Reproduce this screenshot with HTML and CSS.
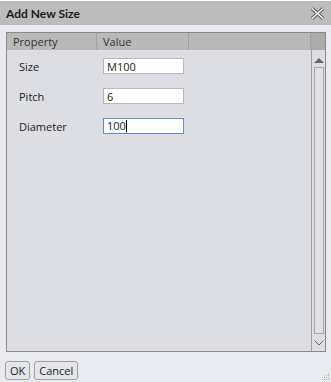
FILE: index.html
```html
<!DOCTYPE html>
<html lang="en">
<head>
  <meta charset="UTF-8">
  <title>Add New Size</title>
  <link rel="stylesheet" href="styles.css">
</head>
<body>
  <div class="dialog">
    <div class="titleBar">
      <span class="title">Add New Size</span>
      <svg class="closeIcon" width="15" height="13" viewBox="0 0 15 13">
        <path d="M2 1.5 L13 11.5 M13 1.5 L2 11.5" stroke="#555" stroke-width="3.4" />
        <path d="M2 1.5 L13 11.5 M13 1.5 L2 11.5" stroke="#fff" stroke-width="1.5" />
      </svg>
    </div>
    <div class="content">
      <div class="grid">
        <div class="gridHeader">
          <div class="col colProp">Property</div>
          <div class="col colValue">Value</div>
          <div class="col colRest"></div>
          <div class="col colScroll"></div>
        </div>
        <div class="gridBody">
          <div class="rows">
            <div class="row">
              <span class="label">Size</span>
              <input type="text" class="field" value="M100">
            </div>
            <div class="row">
              <span class="label">Pitch</span>
              <input type="text" class="field" value="6">
            </div>
            <div class="row">
              <span class="label">Diameter</span>
              <div class="field focused">100<span class="caret"></span></div>
            </div>
          </div>
          <div class="scrollBar">
            <svg class="arrow" width="10" height="6" viewBox="0 0 10 6"><path d="M0 6 L5 1 L10 6 Z" fill="#666"/></svg>
            <div class="thumb"></div>
            <svg class="arrow" width="10" height="6" viewBox="0 0 10 6"><path d="M0.5 0.5 L5 5 L9.5 0.5" fill="none" stroke="#666"/></svg>
          </div>
        </div>
      </div>
    </div>
    <div class="buttons">
      <button class="btn">OK</button>
      <button class="btn">Cancel</button>
    </div>
    <svg class="grip" width="8" height="8" viewBox="0 0 8 8">
      <rect x="6" y="0" width="1" height="1" fill="#aaa"/>
      <rect x="4" y="2" width="1" height="1" fill="#aaa"/>
      <rect x="6" y="2" width="1" height="1" fill="#aaa"/>
      <rect x="2" y="4" width="1" height="1" fill="#aaa"/>
      <rect x="4" y="4" width="1" height="1" fill="#aaa"/>
      <rect x="6" y="4" width="1" height="1" fill="#aaa"/>
      <rect x="0" y="6" width="1" height="1" fill="#aaa"/>
      <rect x="2" y="6" width="1" height="1" fill="#aaa"/>
      <rect x="4" y="6" width="1" height="1" fill="#aaa"/>
      <rect x="6" y="6" width="1" height="1" fill="#aaa"/>
    </svg>
  </div>
</body>
</html>
```
FILE: styles.css
```css
body {
  margin: 0;
  padding: 0;
  font-family: 'Open Sans', 'Noto Sans', sans-serif;
  font-size: 11px;
  color: #222;
  background-color: #fff;
}

.dialog {
  position: relative;
  width: 331px;
  height: 381px;
  margin-top: 1px;
  background-color: #e8eaf0;
  display: flex;
  flex-direction: column;
}

.titleBar {
  height: 24px;
  background-color: #bcbcbc;
  display: flex;
  align-items: center;
  justify-content: space-between;
  padding: 0 6px 0 6px;
}

.title {
  font-family: 'Lato', 'Open Sans', sans-serif;
  font-weight: bold;
  font-size: 12px;
  color: #1a1a1a;
}

.content {
  padding: 7px 5px 0 6px;
}

.grid {
  border: 1px solid #8a8a8a;
  height: 318px;
  display: flex;
  flex-direction: column;
  background-color: #dcdee3;
}

.gridHeader {
  display: flex;
  height: 17px;
  background-color: #b9b9b9;
}

.col {
  border-right: 1px solid #a2a2a2;
  padding-left: 6px;
  line-height: 17px;
  color: #333;
}

.colProp {
  width: 83px;
}

.colValue {
  width: 85px;
}

.colRest {
  flex: 1;
}

.colScroll {
  width: 14px;
  padding: 0;
  border-right: none;
  background-color: #acacac;
}

.gridBody {
  flex: 1;
  display: flex;
}

.rows {
  flex: 1;
  padding-top: 1px;
}

.row {
  display: flex;
  align-items: center;
  height: 30px;
}

.label {
  width: 84px;
  padding-left: 12px;
}

.field {
  width: 81px;
  height: 16px;
  box-sizing: border-box;
  border: 1px solid #b8b8b8;
  background-color: #fff;
  font-family: inherit;
  font-size: 11px;
  padding: 0 3px;
  margin: 0;
  line-height: 14px;
  color: #222;
}

.focused {
  border-color: #5b8fd0;
}

.caret {
  display: inline-block;
  width: 1px;
  height: 12px;
  background-color: #000;
  vertical-align: -2px;
}

.scrollBar {
  width: 14px;
  border-left: 1px solid #a0a0a0;
  display: flex;
  flex-direction: column;
  align-items: center;
  padding: 7px 0 5px;
  box-sizing: border-box;
}

.arrow {
  display: block;
}

.thumb {
  flex: 1;
  width: 10px;
  margin: 4px 0 6px;
  border: 1px solid #a8a8a8;
  box-sizing: border-box;
  background-color: #dfe1e6;
}

.buttons {
  display: flex;
  gap: 4px;
  padding: 9px 0 0 5px;
}

.btn {
  font-family: inherit;
  font-size: 11px;
  height: 19px;
  padding: 0 4px;
  border: 1px solid #a0a0a0;
  border-radius: 3px;
  background-color: #e4e6eb;
  color: #222;
}

.closeIcon {
  display: block;
}

.grip {
  position: absolute;
  right: 1px;
  bottom: 1px;
}
```
